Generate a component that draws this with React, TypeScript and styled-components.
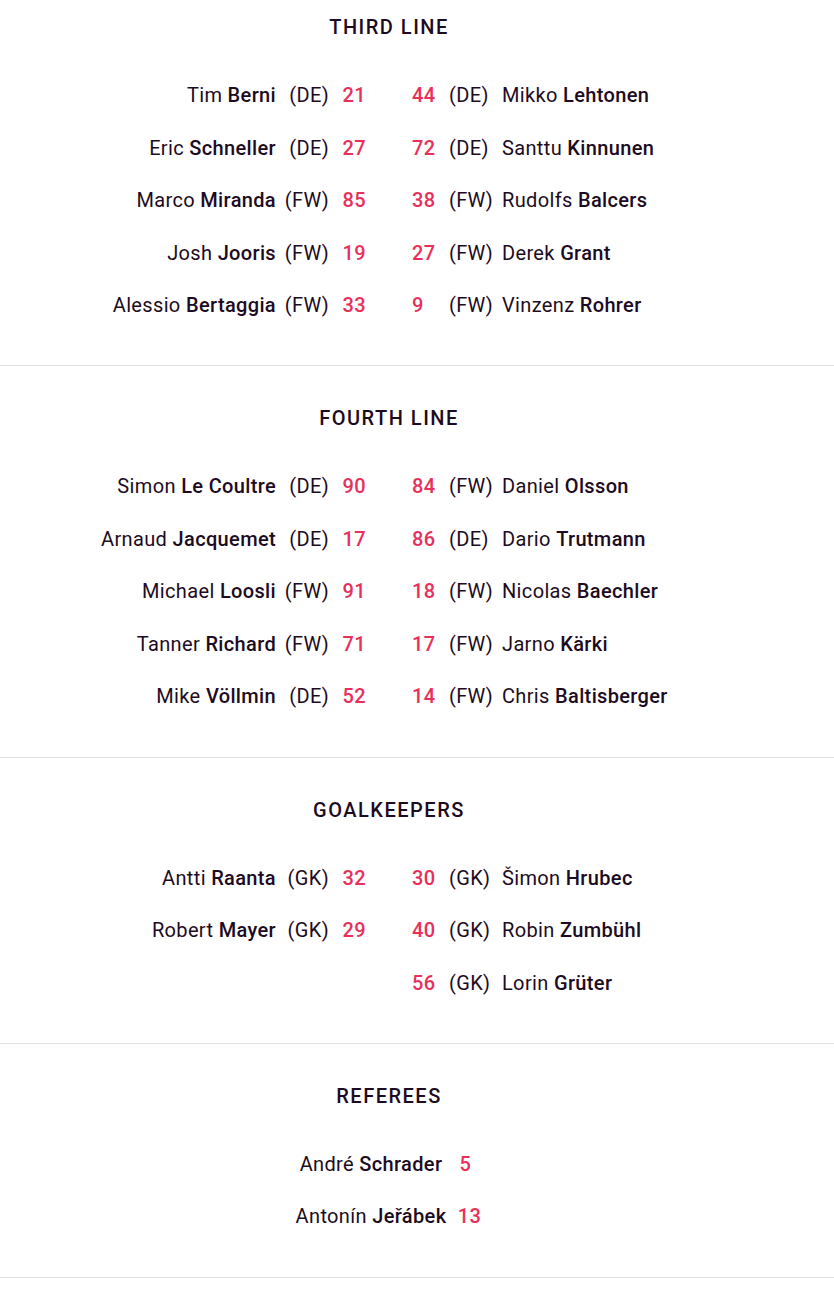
import React, { FC } from 'react';
import styled, { createGlobalStyle } from 'styled-components';

const GlobalStyle = createGlobalStyle`
  body {
    margin: 0;
    background: #ffffff;
    font-family: Roboto, 'Noto Sans', sans-serif;
    color: #1d0b22;
  }
`;

const ink = '#1d0b22';
const accent = '#e8305a';

type Side = 'left' | 'right';

interface Player {
  first: string;
  last: string;
  pos?: string;
  num: string;
}

interface LineupSection {
  title: string;
  left: Player[];
  right: Player[];
}

const lines: LineupSection[] = [
  {
    title: 'Third Line',
    left: [
      { first: 'Tim', last: 'Berni', pos: 'DE', num: '21' },
      { first: 'Eric', last: 'Schneller', pos: 'DE', num: '27' },
      { first: 'Marco', last: 'Miranda', pos: 'FW', num: '85' },
      { first: 'Josh', last: 'Jooris', pos: 'FW', num: '19' },
      { first: 'Alessio', last: 'Bertaggia', pos: 'FW', num: '33' },
    ],
    right: [
      { first: 'Mikko', last: 'Lehtonen', pos: 'DE', num: '44' },
      { first: 'Santtu', last: 'Kinnunen', pos: 'DE', num: '72' },
      { first: 'Rudolfs', last: 'Balcers', pos: 'FW', num: '38' },
      { first: 'Derek', last: 'Grant', pos: 'FW', num: '27' },
      { first: 'Vinzenz', last: 'Rohrer', pos: 'FW', num: '9' },
    ],
  },
  {
    title: 'Fourth Line',
    left: [
      { first: 'Simon', last: 'Le Coultre', pos: 'DE', num: '90' },
      { first: 'Arnaud', last: 'Jacquemet', pos: 'DE', num: '17' },
      { first: 'Michael', last: 'Loosli', pos: 'FW', num: '91' },
      { first: 'Tanner', last: 'Richard', pos: 'FW', num: '71' },
      { first: 'Mike', last: 'Völlmin', pos: 'DE', num: '52' },
    ],
    right: [
      { first: 'Daniel', last: 'Olsson', pos: 'FW', num: '84' },
      { first: 'Dario', last: 'Trutmann', pos: 'DE', num: '86' },
      { first: 'Nicolas', last: 'Baechler', pos: 'FW', num: '18' },
      { first: 'Jarno', last: 'Kärki', pos: 'FW', num: '17' },
      { first: 'Chris', last: 'Baltisberger', pos: 'FW', num: '14' },
    ],
  },
  {
    title: 'Goalkeepers',
    left: [
      { first: 'Antti', last: 'Raanta', pos: 'GK', num: '32' },
      { first: 'Robert', last: 'Mayer', pos: 'GK', num: '29' },
    ],
    right: [
      { first: 'Šimon', last: 'Hrubec', pos: 'GK', num: '30' },
      { first: 'Robin', last: 'Zumbühl', pos: 'GK', num: '40' },
      { first: 'Lorin', last: 'Grüter', pos: 'GK', num: '56' },
    ],
  },
];

const referees: Player[] = [
  { first: 'André', last: 'Schrader', num: '5' },
  { first: 'Antonín', last: 'Jeřábek', num: '13' },
];

const Page = styled.div`
  width: 834px;
  background: #ffffff;
`;

const Section = styled.section<{ $first?: boolean }>`
  padding: ${(p) => (p.$first ? '15px' : '40px')} 56px 34px 0;
  border-bottom: 1px solid #e2e2e2;
`;

const Title = styled.h2`
  margin: 0 0 29.75px;
  text-align: center;
  font-size: 20px;
  line-height: 24px;
  font-weight: 500;
  letter-spacing: 1.5px;
  text-transform: uppercase;
  color: ${ink};
`;

const Columns = styled.div`
  display: grid;
  grid-template-columns: 1fr 1fr;
  column-gap: 46px;
`;

const Column = styled.div`
  display: flex;
  flex-direction: column;
`;

// left rows read name → pos → number; right rows are mirrored
const Row = styled.div<{ $side: Side }>`
  display: flex;
  align-items: center;
  justify-content: flex-end;
  flex-direction: ${(p) => (p.$side === 'left' ? 'row' : 'row-reverse')};
  height: 52.5px;
  font-size: 20px;
  line-height: 24px;
  letter-spacing: 0.35px;
  white-space: nowrap;
`;

const Name = styled.span`
  color: ${ink};
  font-weight: 400;

  b {
    font-weight: 500;
  }
`;

const Pos = styled.span<{ $side: Side }>`
  width: 46px;
  margin: 0 7px;
  ${(p) => (p.$side === 'left' ? 'margin-right: 13px;' : 'margin-left: 13px;')}
  text-align: ${(p) => (p.$side === 'left' ? 'right' : 'left')};
  color: ${ink};
`;

const Num = styled.span<{ $side: Side }>`
  width: 24px;
  text-align: ${(p) => (p.$side === 'left' ? 'right' : 'left')};
  color: ${accent};
  font-weight: 500;
`;

const RefList = styled.div`
  display: flex;
  flex-direction: column;
  align-items: center;
`;

const RefRow = styled.div`
  display: flex;
  align-items: center;
  height: 52.5px;
  font-size: 20px;
  line-height: 24px;
  letter-spacing: 0.35px;
  white-space: nowrap;
`;

const RefNum = styled.span`
  width: 26px;
  margin-left: 10px;
  text-align: center;
  color: ${accent};
  font-weight: 500;
`;

const PlayerRow: FC<{ player: Player; side: Side }> = ({ player, side }) => (
  <Row $side={side}>
    <Name>
      {player.first} <b>{player.last}</b>
    </Name>
    <Pos $side={side}>({player.pos})</Pos>
    <Num $side={side}>{player.num}</Num>
  </Row>
);

const App: FC = () => {
  return (
    <Page>
      <GlobalStyle />
      {lines.map((line, i) => (
        <Section key={line.title} $first={i === 0}>
          <Title>{line.title}</Title>
          <Columns>
            <Column>
              {line.left.map((p) => (
                <PlayerRow key={p.last} player={p} side="left" />
              ))}
            </Column>
            <Column>
              {line.right.map((p) => (
                <PlayerRow key={p.last} player={p} side="right" />
              ))}
            </Column>
          </Columns>
        </Section>
      ))}
      <Section>
        <Title>Referees</Title>
        <RefList>
          {referees.map((r) => (
            <RefRow key={r.last}>
              <Name>
                {r.first} <b>{r.last}</b>
              </Name>
              <RefNum>{r.num}</RefNum>
            </RefRow>
          ))}
        </RefList>
      </Section>
    </Page>
  );
};

export default App;
